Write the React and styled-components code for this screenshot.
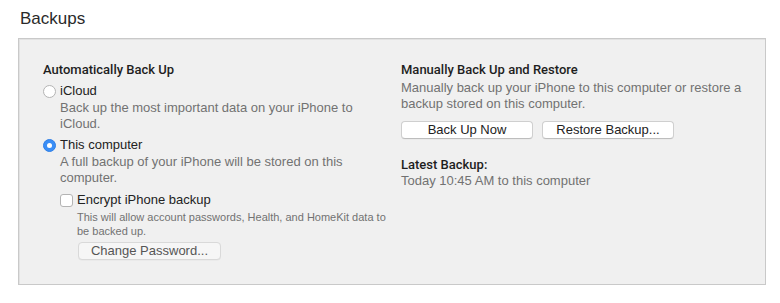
import React from "react";
import styled, { createGlobalStyle } from "styled-components";

const Global = createGlobalStyle`
  html, body { margin: 0; padding: 0; background: #ffffff; }
  body { font-family: "Liberation Sans", Arial, sans-serif; color: #222; }
`;

const Page = styled.div`
  width: 780px;
  height: 303px;
  box-sizing: border-box;
  padding: 8px 14px 0 18px;
`;

const Title = styled.h1`
  margin: 0 0 0 2px;
  font-size: 17px;
  font-weight: 400;
  color: #2a2a2a;
  line-height: 22px;
`;

const Panel = styled.div`
  margin-top: 8px;
  width: 748px;
  height: 247px;
  box-sizing: border-box;
  background: #f0f0f0;
  border: 1px solid #c9c9c9;
  box-shadow: inset 1px 1px 0 #e2e2e2;
  display: grid;
  grid-template-columns: 358px 1fr;
  padding: 22px 0 0 24px;
`;

const Column = styled.div`
  display: flex;
  flex-direction: column;
  align-items: flex-start;
`;

const Heading = styled.div`
  font-family: Roboto, "Liberation Sans", sans-serif;
  font-size: 13px;
  font-weight: 500;
  color: #1e1e1e;
  line-height: 18px;
`;

const OptionRow = styled.label`
  display: flex;
  align-items: center;
  gap: 4px;
  margin-top: ${(p) => p.$mt ?? 0}px;
  margin-left: ${(p) => p.$indent ?? 0}px;
  font-size: 13px;
  color: #222;
  line-height: 18px;
`;

const Radio = styled.span`
  width: 13px;
  height: 13px;
  box-sizing: border-box;
  border-radius: 50%;
  flex: none;
  display: flex;
  align-items: center;
  justify-content: center;
  background: ${(p) => (p.$checked ? "#3a8ef6" : "#ffffff")};
  border: 1px solid ${(p) => (p.$checked ? "#2f7fe6" : "#b4b4b4")};
  &::after {
    content: "";
    display: ${(p) => (p.$checked ? "block" : "none")};
    width: 5px;
    height: 5px;
    border-radius: 50%;
    background: #fff;
  }
`;

const Checkbox = styled.span`
  width: 13px;
  height: 13px;
  box-sizing: border-box;
  flex: none;
  border-radius: 3px;
  background: #fff;
  border: 1px solid #b4b4b4;
`;

const Desc = styled.div`
  margin-left: ${(p) => p.$indent ?? 17}px;
  margin-top: ${(p) => p.$mt ?? 0}px;
  font-size: ${(p) => (p.$small ? 11 : 13)}px;
  line-height: ${(p) => (p.$small ? 14 : 16)}px;
  color: #727272;
  max-width: ${(p) => p.$max ?? 300}px;
`;

const Button = styled.button`
  font-family: inherit;
  font-size: 13px;
  color: #222;
  background: #ffffff;
  border: 1px solid #cfcfcf;
  border-bottom-color: #bdbdbd;
  border-radius: 4px;
  height: 18px;
  width: ${(p) => p.$w}px;
  padding: 0;
  line-height: 16px;
  box-shadow: 0 0.5px 0 rgba(0,0,0,0.05);
  text-align: center;
`;

const MutedButton = styled(Button)`
  background: #f6f6f6;
  color: #555;
  border-color: #d9d9d9;
  margin-left: 35px;
  margin-top: 4px;
`;

const ButtonRow = styled.div`
  display: flex;
  gap: 9px;
  margin-top: 9px;
`;

const Label = styled.div`
  margin-top: ${(p) => p.$mt ?? 0}px;
  font-family: ${(p) => (p.$bold ? 'Roboto, "Liberation Sans", sans-serif' : "inherit")};
  font-size: 13px;
  line-height: 16px;
  font-weight: ${(p) => (p.$bold ? 500 : 400)};
  color: ${(p) => (p.$muted ? "#727272" : "#1e1e1e")};
`;

export default function App() {
  return (
    <>
      <Global />
      <Page>
        <Title>Backups</Title>
        <Panel>
          <Column>
            <Heading>Automatically Back Up</Heading>
            <OptionRow $mt={3}>
              <Radio />
              iCloud
            </OptionRow>
            <Desc $max={300}>
              Back up the most important data on your iPhone to iCloud.
            </Desc>
            <OptionRow $mt={4}>
              <Radio $checked />
              This computer
            </OptionRow>
            <Desc $max={290}>
              A full backup of your iPhone will be stored on this computer.
            </Desc>
            <OptionRow $mt={5} $indent={17}>
              <Checkbox />
              Encrypt iPhone backup
            </OptionRow>
            <Desc $indent={34} $small $mt={1} $max={320}>
              This will allow account passwords, Health, and HomeKit data to be backed up.
            </Desc>
            <MutedButton $w={143}>Change Password...</MutedButton>
          </Column>
          <Column>
            <Heading>Manually Back Up and Restore</Heading>
            <Desc $indent={0} $mt={1} $max={345}>
              Manually back up your iPhone to this computer or restore a backup stored on this computer.
            </Desc>
            <ButtonRow>
              <Button $w={132}>Back Up Now</Button>
              <Button $w={132}>Restore Backup...</Button>
            </ButtonRow>
            <Label $bold $mt={18}>Latest Backup:</Label>
            <Label $muted>Today 10:45 AM to this computer</Label>
          </Column>
        </Panel>
      </Page>
    </>
  );
}
